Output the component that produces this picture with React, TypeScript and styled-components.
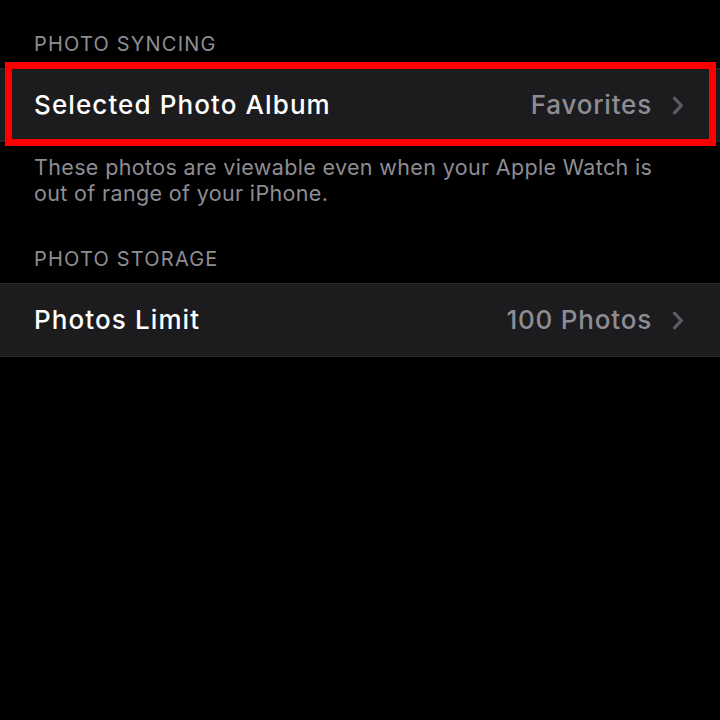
import React from "react";
import styled, { createGlobalStyle, css } from "styled-components";

const GlobalStyle = createGlobalStyle`
  html, body {
    margin: 0;
    padding: 0;
    background: #000;
  }
  body {
    font-family: Inter, "Noto Sans", "Liberation Sans", sans-serif;
    -webkit-font-smoothing: antialiased;
  }
`;

const Screen = styled.div`
  width: 720px;
  min-height: 720px;
  background: #000;
  padding-top: 32px;
  display: flex;
  flex-direction: column;
`;

const Section = styled.section`
  display: flex;
  flex-direction: column;
`;

const SectionHeader = styled.div`
  padding: 0 34px 12px;
  font-size: 20px;
  line-height: 24px;
  color: #8d8d92;
  text-transform: uppercase;
  letter-spacing: 1.2px;
`;

const Group = styled.div`
  background: #1c1c1e;
  border-top: 1px solid #29292b;
  border-bottom: 1px solid #29292b;
`;

const Row = styled.div<{ $highlighted?: boolean }>`
  position: relative;
  height: 72px;
  display: flex;
  align-items: center;
  padding: 0 36px 0 34px;
  gap: 20px;

  ${({ $highlighted }) =>
    $highlighted &&
    css`
      &::after {
        content: "";
        position: absolute;
        top: -7px;
        bottom: -5px;
        left: 5px;
        right: 4px;
        border: 7px solid #ff0000;
        pointer-events: none;
      }
    `}
`;

const Title = styled.span`
  flex: 1;
  font-size: 26px;
  font-weight: 500;
  line-height: 32px;
  color: #ffffff;
  letter-spacing: 1.1px;
`;

const Value = styled.span`
  font-size: 26px;
  font-weight: 500;
  line-height: 32px;
  color: #8d8d93;
  letter-spacing: 0.8px;
`;

const Footer = styled.div`
  padding: 12px 60px 41px 34px;
  font-size: 21.5px;
  line-height: 26px;
  color: #8d8d93;
  letter-spacing: 0.35px;
`;

const Chevron = () => (
  <svg width="12" height="19" viewBox="0 0 12 19" fill="none">
    <path
      d="M2.5 2.2 L9.3 9.5 L2.5 16.8"
      stroke="#5b5b60"
      strokeWidth="3.2"
      strokeLinecap="round"
      strokeLinejoin="round"
    />
  </svg>
);

type SettingProps = {
  title: string;
  value: string;
  highlighted?: boolean;
};

const SettingRow = ({ title, value, highlighted }: SettingProps) => (
  <Row $highlighted={highlighted}>
    <Title>{title}</Title>
    <Value>{value}</Value>
    <Chevron />
  </Row>
);

export default function App() {
  return (
    <>
      <GlobalStyle />
      <Screen>
        <Section>
          <SectionHeader>Photo Syncing</SectionHeader>
          <Group>
            <SettingRow title="Selected Photo Album" value="Favorites" highlighted />
          </Group>
          <Footer>
            These photos are viewable even when your Apple Watch is out of range of your iPhone.
          </Footer>
        </Section>
        <Section>
          <SectionHeader>Photo Storage</SectionHeader>
          <Group>
            <SettingRow title="Photos Limit" value="100 Photos" />
          </Group>
        </Section>
      </Screen>
    </>
  );
}
